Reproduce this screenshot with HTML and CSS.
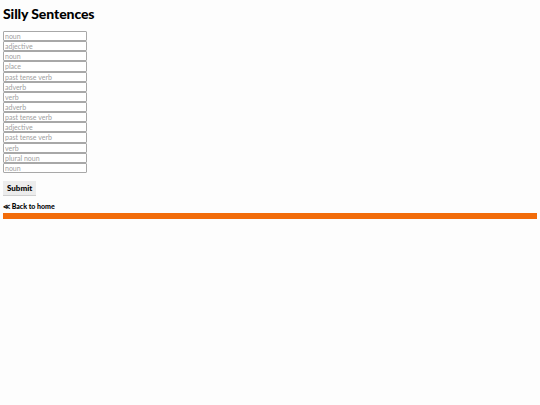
FILE: index.html
```html
<!DOCTYPE html>
<html>
<head>
<meta charset="utf-8">
<link rel="stylesheet" href="styles.css">
</head>
<body>
<h1 class="title">Silly Sentences</h1>
<form class="form">
<div class="fields">
<input class="field" placeholder="noun">
<input class="field" placeholder="adjective">
<input class="field" placeholder="noun">
<input class="field" placeholder="place">
<input class="field" placeholder="past tense verb">
<input class="field" placeholder="adverb">
<input class="field" placeholder="verb">
<input class="field" placeholder="adverb">
<input class="field" placeholder="past tense verb">
<input class="field" placeholder="adjective">
<input class="field" placeholder="past tense verb">
<input class="field" placeholder="verb">
<input class="field" placeholder="plural noun">
<input class="field" placeholder="noun">
</div>
<button class="submit" type="button">Submit</button>
</form>
<a class="back" href="#">≪ Back to home</a>
<div class="bar"></div>
</body>
</html>
```
FILE: styles.css
```css
html { background: #fdfdfd; }
body {
  margin: 3px;
  font-family: "Lato", "Open Sans", sans-serif;
  color: #000;
}
.title {
  margin: 2px 0 0 0;
  font-size: 14px;
  font-weight: 900;
  line-height: 18px;
  letter-spacing: -0.1px;
}
.form { margin-top: 8px; }
.fields {
  display: flex;
  flex-direction: column;
  align-items: flex-start;
}
.field {
  box-sizing: border-box;
  width: 84px;
  height: 10.15px;
  margin: 0;
  padding: 0 1px;
  border: 1px solid #a8a8a8;
  border-radius: 1px;
  background: #fff;
  font-family: "Lato", sans-serif;
  font-weight: 400;
  font-size: 7px;
  line-height: 8px;
  outline: none;
}
.field::placeholder { color: #a0a0a0; }
.submit {
  display: block;
  margin-top: 8px;
  padding: 0 4px;
  height: 15px;
  border: none;
  border-bottom: 1px solid #cfcfcf;
  background: #ececec;
  font-family: "Lato", sans-serif;
  font-weight: 900;
  font-size: 8px;
  color: #000;
}
.back {
  display: block;
  margin-top: 6px;
  font-size: 7px;
  font-weight: 900;
  color: #000;
  text-decoration: none;
  line-height: 8px;
}
.bar {
  margin-top: 3px;
  height: 6px;
  background: #f26c0a;
}
```
